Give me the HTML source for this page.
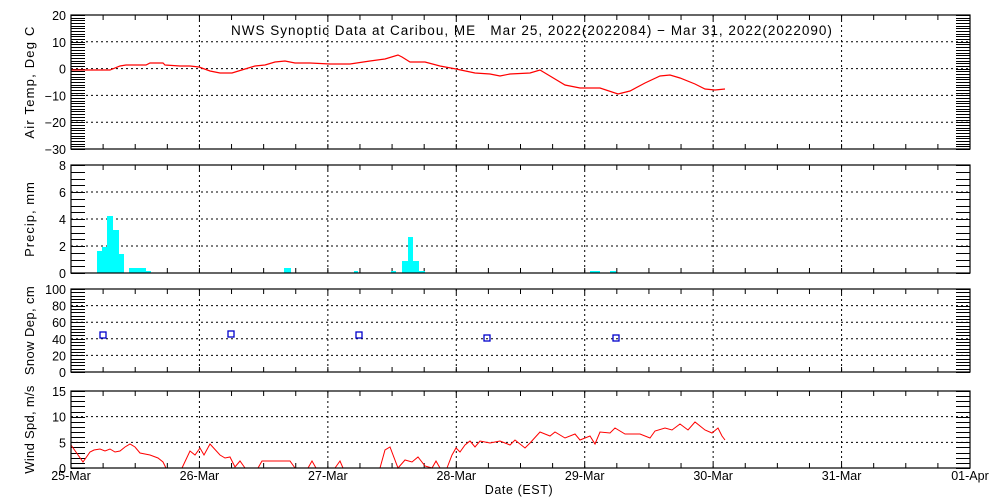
<!DOCTYPE html>
<html><head><meta charset="utf-8"><style>
html,body{margin:0;padding:0;background:#fff;width:1000px;height:500px;overflow:hidden}
svg text{font-family:"Liberation Sans",sans-serif;font-size:12.5px;fill:#000;white-space:pre}
</style></head><body>
<svg id="s" width="1000" height="500" xmlns="http://www.w3.org/2000/svg"></svg>
<script>
const s=document.getElementById('s');let h='';
const X0=71,X1=970,DW=(X1-X0)/7;
const panels=[
 {t:15,b:149,min:-30,max:20,maj:10,sub:10,lab:'Air Temp, Deg C',ls:1.2},
 {t:165,b:273,min:0,max:8,maj:2,sub:4,lab:'Precip, mm',ls:1},
 {t:289,b:372,min:0,max:100,maj:20,sub:5,lab:'Snow Dep, cm',ls:0.4},
 {t:391,b:468,min:0,max:15,maj:5,sub:5,lab:'Wind Spd, m/s',ls:0.3}];
panels.forEach((p,i)=>{
 const Y=v=>p.b-(v-p.min)/(p.max-p.min)*(p.b-p.t);p.Y=Y;
 for(let d=1;d<7;d++){const x=X0+d*DW;h+=`<line x1="${x}" y1="${p.t}" x2="${x}" y2="${p.b}" stroke="#000" stroke-dasharray="2,3"/>`;}
 for(let v=p.min+p.maj;v<p.max;v+=p.maj){h+=`<line x1="${X0}" y1="${Y(v)}" x2="${X1}" y2="${Y(v)}" stroke="#000" stroke-dasharray="2,3"/>`;}
 const st=p.maj/p.sub;
 for(let v=p.min;v<=p.max+1e-6;v+=st){const y=Math.round(Y(v))+.5;h+=`<line x1="${X0}" y1="${y}" x2="${X0+14}" y2="${y}" stroke="#000"/><line x1="${X1-14}" y1="${y}" x2="${X1}" y2="${y}" stroke="#000"/>`;}
 for(let v=p.min;v<=p.max;v+=p.maj){h+=`<text x="66" y="${Y(v)+5}" text-anchor="end">${v<0?'−'+(-v):v}</text>`;}
 for(let k=1;k<28;k++){const x=X0+k*DW/4;h+=`<line x1="${x}" y1="${p.t}" x2="${x}" y2="${p.t+5}" stroke="#000"/><line x1="${x}" y1="${p.b-5}" x2="${x}" y2="${p.b}" stroke="#000"/>`;}
 const cy=(p.t+p.b)/2;
 h+=`<text transform="translate(34,${cy}) rotate(-90)" text-anchor="middle" style="font-size:13px;letter-spacing:${p.ls}px">${p.lab}</text>`;
});
const bars=[[97,102,251],[102,107,247],[107,113,216],[113,119,230],[119,124,254],[129,146,268],[146,151,271],[284,291,268],[354,358,271],[391,396,271],[402,408,261],[408,413,237],[413,419,261],[419,425,271],[590,600,271],[610,616,271]];
bars.forEach(b=>h+=`<rect x="${b[0]}" y="${b[2]}" width="${b[1]-b[0]}" height="${273-b[2]}" fill="#00ffff"/>`);
const tp="71,70 110,70 120,66 126,65 146,65 150,63 163,63 165,65 180,66 190,66 199,67 210,71 220,73 232,73 245,69 255,66 265,65 275,62 285,61 295,63 310,63 330,64 350,64 370,61 385,59 398,55 402,57 410,62 425,62 440,66 456,69 475,73 490,74 500,76 510,74 530,73 540,70 550,76 565,85 580,88 600,88 618,94 630,91 645,83 660,76 670,75 680,78 695,84 705,89 715,90 725,89";
h+=`<polyline points="${tp}" fill="none" stroke="#f00" stroke-width="1.2"/>`;
const w=["71,445 83,462 90,452 94,450 100,449 105,451 110,449 115,452 120,451 125,447 130,444 135,447 140,453 150,455 158,458 163,462 166,468",
"182,468 190,451 195,455 200,448 204,455 210,444 220,455 225,458 230,457 235,467 240,461 245,468",
"258,468 262,461 290,461 295,468","308,468 312,461 316,468","335,468 340,461 343,468",
"380,468 385,450 390,447 398,468 405,460 412,462 418,457 425,466 432,468 436,461 440,468 447,468 452,455 456,448 460,452 465,445 470,441 475,447 480,441 490,443 500,441 510,445 515,440 525,448 530,443 540,432 550,436 555,432 565,438 575,434 580,440 590,436 595,444 600,432 610,433 615,428 625,434 640,434 650,438 655,431 665,428 672,430 680,424 688,430 695,422 705,430 712,433 718,428 722,436 725,440"];
w.forEach(p=>h+=`<polyline points="${p}" fill="none" stroke="#f00" stroke-width="1"/>`);
[[103,335],[231,334],[359,335],[487,338],[616,338]].forEach(q=>h+=`<rect x="${q[0]-3}" y="${q[1]-3}" width="6" height="6" fill="none" stroke="#00c" stroke-width="1.3"/>`);
panels.forEach(p=>h+=`<rect x="${X0}" y="${p.t}" width="${X1-X0}" height="${p.b-p.t}" fill="none" stroke="#000" stroke-width="1.2"/>`);
const days=['25-Mar','26-Mar','27-Mar','28-Mar','29-Mar','30-Mar','31-Mar','01-Apr'];
days.forEach((d,i)=>h+=`<text x="${X0+i*DW}" y="480" text-anchor="middle">${d}</text>`);
h+=`<text x="519" y="494" text-anchor="middle" style="letter-spacing:0.6px">Date (EST)</text>`;
h+=`<text x="231" y="35" style="font-size:13.5px;letter-spacing:1px">NWS Synoptic Data at Caribou, ME   Mar 25, 2022(2022084) − Mar 31, 2022(2022090)</text>`;
s.innerHTML=h;
</script>
</body></html>
